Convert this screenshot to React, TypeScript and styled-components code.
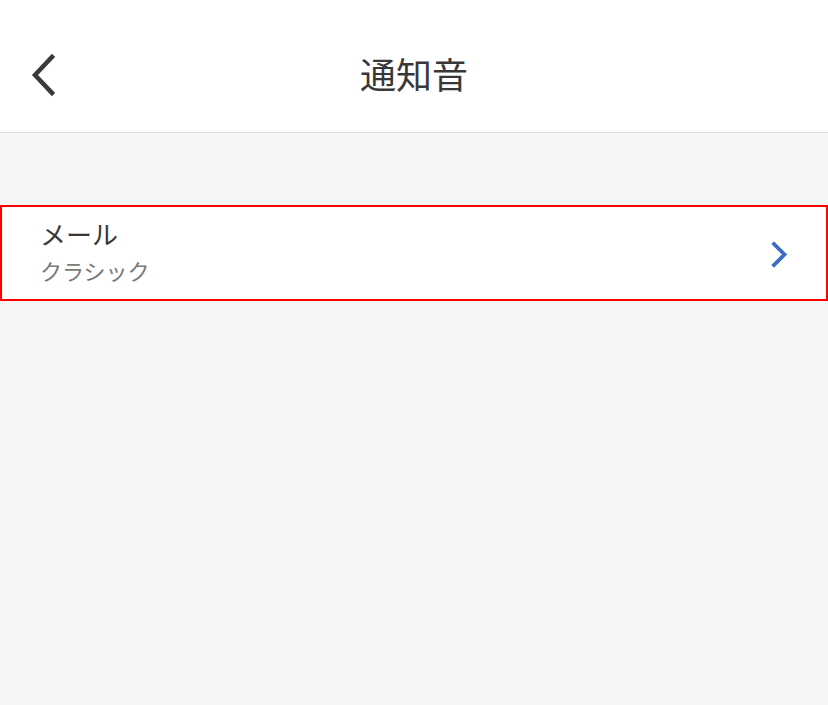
import React from 'react'
import styled, { createGlobalStyle } from 'styled-components'

const GlobalStyle = createGlobalStyle`
  html, body {
    margin: 0;
    padding: 0;
    background: #f5f6f8;
  }
  body {
    font-family: "Noto Sans", "Noto Sans CJK JP", sans-serif;
  }
`

const Page = styled.div`
  width: 828px;
  height: 705px;
  background: #f5f6f8;
  display: flex;
  flex-direction: column;
`

const Header = styled.header`
  box-sizing: border-box;
  height: 133px;
  padding-top: 14px;
  background: #fff;
  border-bottom: 1px solid #dcdde0;
  display: grid;
  grid-template-columns: 100px 1fr 100px;
  align-items: center;
`

const BackButton = styled.button`
  border: 0;
  background: none;
  padding: 4px 0 0 28px;
  height: 48px;
  display: flex;
  align-items: center;
  cursor: pointer;
`

const Title = styled.h1`
  margin: 0;
  text-align: center;
  font-family: "Noto Sans CJK JP", sans-serif;
  font-weight: 400;
  font-size: 36px;
  line-height: 48px;
  color: #383838;
`

const List = styled.div`
  margin-top: 72px;
`

const Row = styled.div`
  box-sizing: border-box;
  height: 96px;
  background: #fff;
  border: 2px solid #ff0000;
  padding: 0 36px 4px 38px;
  display: flex;
  align-items: center;
  justify-content: space-between;
`

const Texts = styled.div`
  display: flex;
  flex-direction: column;
  gap: 4px;
`

const Label = styled.div`
  font-family: "Noto Sans CJK JP", sans-serif;
  font-size: 26px;
  line-height: 34px;
  color: #383838;
`

const Sub = styled.div`
  font-family: "Noto Sans CJK JP", sans-serif;
  font-size: 22px;
  line-height: 30px;
  color: #7a7a7a;
`

const Arrow = styled.span`
  display: flex;
  margin-top: 6px;
`

const BackIcon = () => (
  <svg width="32" height="44" viewBox="0 0 32 44">
    <path d="M24 4 L7 22 L24 40" fill="none" stroke="#3a3a3a" strokeWidth="4.5" strokeLinecap="square" />
  </svg>
)

const ChevronRight = () => (
  <svg width="20" height="30" viewBox="0 0 20 30">
    <path d="M4 5 L14.5 15.5 L4 26" fill="none" stroke="#3a6cc6" strokeWidth="3.8" strokeLinecap="square" />
  </svg>
)

export default function App() {
  return (
    <>
      <GlobalStyle />
      <Page>
        <Header>
          <BackButton aria-label="戻る">
            <BackIcon />
          </BackButton>
          <Title>通知音</Title>
          <span />
        </Header>
        <List>
          <Row>
            <Texts>
              <Label>メール</Label>
              <Sub>クラシック</Sub>
            </Texts>
            <Arrow>
              <ChevronRight />
            </Arrow>
          </Row>
        </List>
      </Page>
    </>
  )
}
